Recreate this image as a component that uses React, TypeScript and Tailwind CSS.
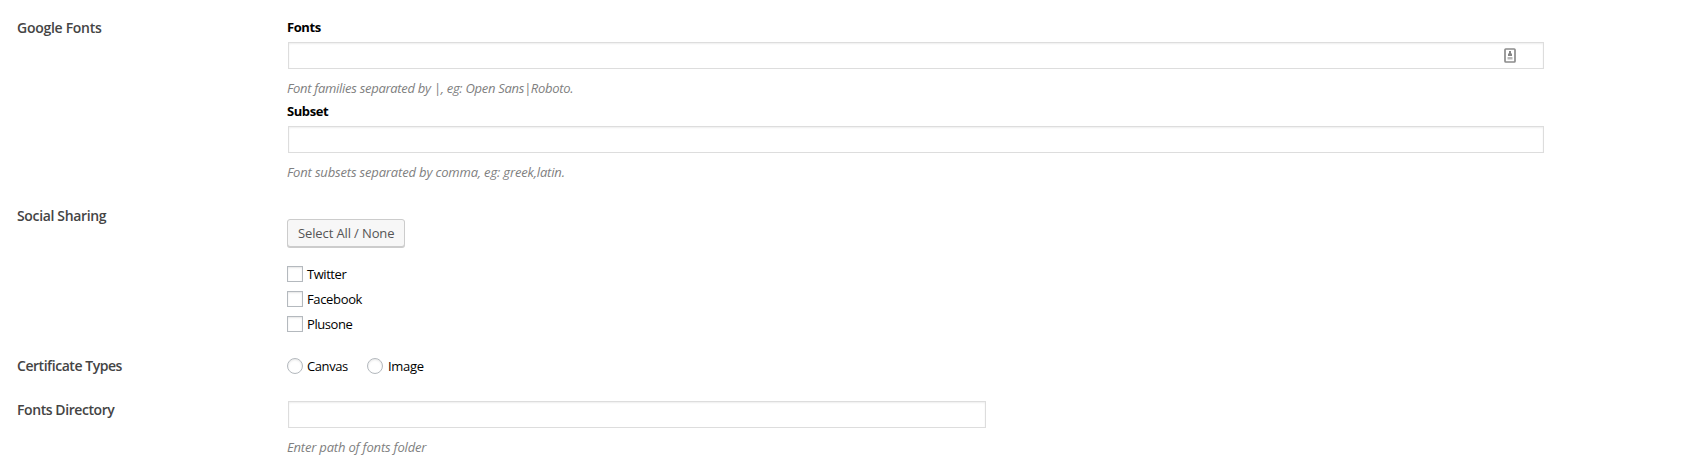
import type { ReactNode } from "react";

type RowProps = { label: string; className: string; labelClass: string; children: ReactNode };

function Row({ label, className, labelClass, children }: RowProps) {
  return (
    <section className={`flex items-start ${className}`}>
      <h3 className={`w-[270px] shrink-0 text-sm leading-5 font-semibold text-[#444] ${labelClass}`}>{label}</h3>
      <div className="min-w-0 grow">{children}</div>
    </section>
  );
}

const field =
  "ml-px flex h-[27px] items-center justify-end border border-[#ddd] bg-white shadow-[inset_0_1px_2px_rgba(0,0,0,0.07)]";
const hint = "mt-[9px] text-[13px] leading-5 text-[#808080] italic";
const box = "size-4 shrink-0 border border-[#b4b9be] bg-white shadow-[inset_0_1px_2px_rgba(0,0,0,0.1)]";

const networks = [
  { name: "Twitter", tracking: "tracking-[-0.45px]" },
  { name: "Facebook", tracking: "tracking-[-0.35px]" },
  { name: "Plusone", tracking: "tracking-[-0.42px]" },
];

const certificateTypes = [
  { name: "Canvas", tracking: "tracking-[-0.4px]", gap: "gap-1" },
  { name: "Image", tracking: "tracking-[-0.3px]", gap: "gap-[5px]" },
];

function AutofillIcon() {
  return (
    <svg width="12" height="15" viewBox="0 0 12 15" fill="none">
      <rect x="1" y="1" width="10" height="13" rx="0.8" stroke="#8c8c8c" strokeWidth="1.7" />
      <path d="M5 3h2v2.500h1V8H4V5.500h1z" fill="#858585" />
      <path d="M3.500 9h5v2.500h-5z" fill="#b8b8b8" />
    </svg>
  );
}

export default function App() {
  return (
    <main className="h-[475px] w-full overflow-hidden bg-white pl-[17px] font-['Open_Sans','Noto_Sans',sans-serif] text-[13px] leading-5 text-black">
      <Row label="Google Fonts" className="pt-[17px]" labelClass="pt-px tracking-[-0.28px]">
        <div className="w-[1257px]">
          <div className="font-bold tracking-[-0.42px]">Fonts</div>
          <div className={`${field} mt-[5px] pr-[27px]`}>
            <AutofillIcon />
          </div>
          <p className={`${hint} tracking-[-0.29px]`}>Font families separated by |, eg: Open Sans|Roboto.</p>
          <div className="mt-[3px] font-bold tracking-[-0.42px]">Subset</div>
          <div className={`${field} mt-[5px]`} />
          <p className={`${hint} tracking-[-0.16px]`}>Font subsets separated by comma, eg: greek,latin.</p>
        </div>
      </Row>
      <Row label="Social Sharing" className="mt-6" labelClass="tracking-[-0.35px]">
        <button className="mt-[13px] flex h-7 w-[118px] items-center rounded-[3px] border border-[#ccc] bg-[#f7f7f7] pl-2.5 tracking-[-0.12px] text-[#555] shadow-[0_1px_0_#ccc]">
          Select All / None
        </button>
        <div className="mt-[17px] flex flex-col gap-[5px]">
          {networks.map(({ name, tracking }) => (
            <label key={name} className="flex items-center gap-1">
              <i className={box} />
              <span className={tracking}>{name}</span>
            </label>
          ))}
        </div>
      </Row>
      <Row label="Certificate Types" className="mt-[22px]" labelClass="tracking-[-0.46px]">
        <div className="flex">
          {certificateTypes.map(({ name, tracking, gap }) => (
            <label key={name} className={`flex w-20 items-center ${gap}`}>
              <i className={`${box} rounded-full`} />
              <span className={tracking}>{name}</span>
            </label>
          ))}
        </div>
      </Row>
      <Row label="Fonts Directory" className="mt-6" labelClass="tracking-[-0.42px]">
        <div className="w-[699px] pt-px">
          <div className={field} />
          <p className={`${hint} tracking-[-0.19px]`}>Enter path of fonts folder</p>
        </div>
      </Row>
    </main>
  );
}
